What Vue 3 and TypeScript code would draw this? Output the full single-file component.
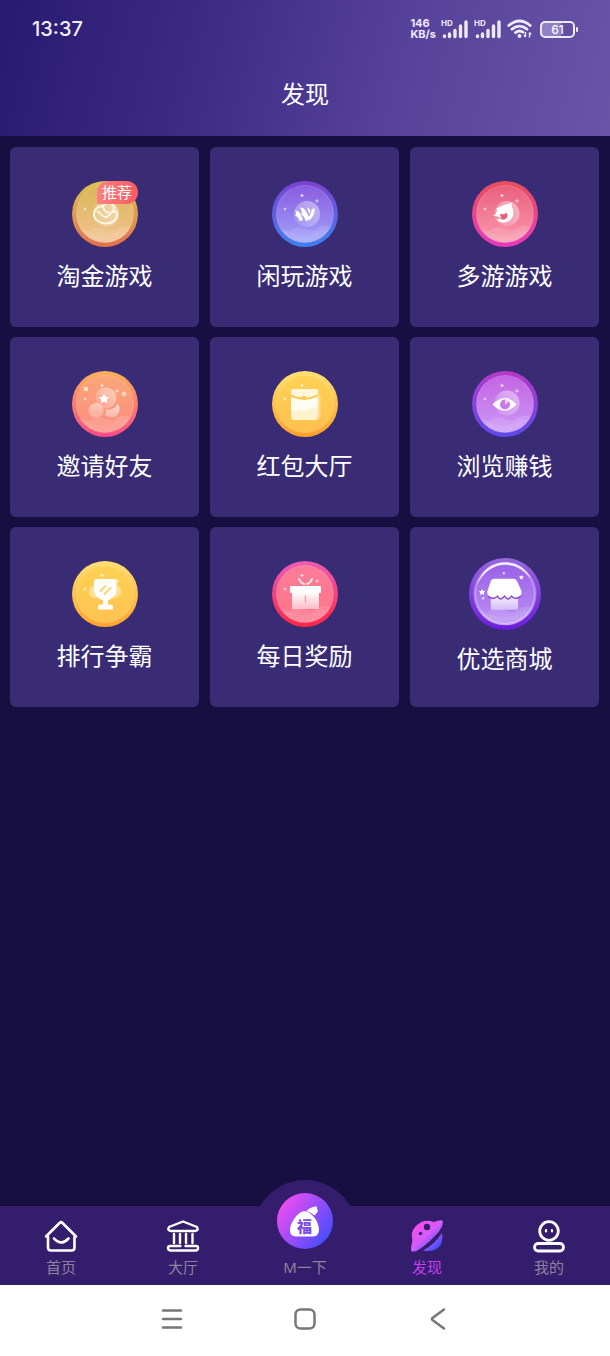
<script setup lang="ts">
interface Game {
  id: string
  label: string
  rim: [string, string]
  face: [string, string]
  clouds: boolean
  badge?: string
}

interface Tab {
  id: string
  label: string
}

const games: Game[] = [
  { id: 'gold', label: '淘金游戏', rim: ['#dcc552', '#e2704c'], face: ['#dab85c', '#f2c08c'], clouds: true, badge: '推荐' },
  { id: 'play', label: '闲玩游戏', rim: ['#7c42d2', '#3f80f0'], face: ['#8a5ce0', '#a0a0fa'], clouds: true },
  { id: 'multi', label: '多游游戏', rim: ['#e8505a', '#ea38bc'], face: ['#ea607c', '#fb98ae'], clouds: true },
  { id: 'invite', label: '邀请好友', rim: ['#fbb058', '#fb4a84'], face: ['#fba678', '#fb8c80'], clouds: true },
  { id: 'packet', label: '红包大厅', rim: ['#ffe070', '#ffa028'], face: ['#ffd254', '#ffc04e'], clouds: false },
  { id: 'browse', label: '浏览赚钱', rim: ['#b838c8', '#5c4aea'], face: ['#c464e2', '#cb98f8'], clouds: true },
  { id: 'rank', label: '排行争霸', rim: ['#ffe070', '#ffa42c'], face: ['#ffd254', '#ffc250'], clouds: false },
  { id: 'daily', label: '每日奖励', rim: ['#ec5cb4', '#ff2646'], face: ['#fb7c98', '#ff7488'], clouds: true },
  { id: 'shop', label: '优选商城', rim: ['#9a66e0', '#6c1cdc'], face: ['#9a60e6', '#bc90f6'], clouds: true },
]

const tabs: Tab[] = [
  { id: 'home', label: '首页' },
  { id: 'hall', label: '大厅' },
  { id: 'lucky', label: 'M一下' },
  { id: 'discover', label: '发现' },
  { id: 'mine', label: '我的' },
]

const active = 'discover'
</script>

<template>
  <div class="page">
    <header class="header">
      <div class="status">
        <time class="clock">13:37</time>
        <div class="indicators">
          <span class="speed"><span>146</span><span>KB/s</span></span>
          <svg v-for="n in 2" :key="n" class="signal" viewBox="0 0 28 20" aria-hidden="true">
            <text x="0" y="7" class="hd">HD</text>
            <g stroke="#eee8fb" stroke-width="3.4" stroke-linecap="round">
              <path d="M3.500 17v.5M8.500 15v2.500M14 11.500v6M19.500 7v10.500M25 3v14.500" />
            </g>
          </svg>
          <svg class="wifi" viewBox="0 0 26 20" aria-hidden="true">
            <g fill="none" stroke="#eee8fb" stroke-width="2.800" stroke-linecap="round">
              <path d="M1.800 6.500Q12.500-2.500 23.200 6.500M5 10.200Q12.500 4 20 10.200M8.500 13.600Q12.500 10.500 16 13.200" />
            </g>
            <circle cx="12.500" cy="17" r="2" fill="#eee8fb" />
            <path d="M18.500 13v5M18.500 18l-1.500-2M22.500 18.500v-5M22.500 13.500l1.500 2" fill="none" stroke="#eee8fb" stroke-width="1.400" />
          </svg>
          <span class="battery"><span class="level">61</span></span>
        </div>
      </div>
      <h1 class="title">发现</h1>
    </header>

    <main class="grid">
      <button v-for="g in games" :key="g.id" type="button" class="card">
        <span class="medal">
          <svg :class="['coin', { large: g.id === 'shop' }]" viewBox="0 0 66 66" aria-hidden="true">
            <defs>
              <linearGradient :id="`rim-${g.id}`" x1="0" y1="0" x2="0" y2="1">
                <stop offset="0" :stop-color="g.rim[0]" />
                <stop offset="1" :stop-color="g.rim[1]" />
              </linearGradient>
              <linearGradient :id="`face-${g.id}`" x1="0" y1="0" x2="0" y2="1">
                <stop offset="0" :stop-color="g.face[0]" />
                <stop offset="1" :stop-color="g.face[1]" />
              </linearGradient>
              <linearGradient :id="`moon-${g.id}`" x1="1" y1="0" x2="0" y2="1">
                <stop offset="0" stop-color="#fff" stop-opacity="0.5" />
                <stop offset="1" stop-color="#fff" stop-opacity="0.08" />
              </linearGradient>
              <linearGradient :id="`fade-${g.id}`" x1="0" y1="0" x2="0" y2="1">
                <stop offset="0" stop-color="#fff" />
                <stop offset="1" stop-color="#fff" stop-opacity="0.5" />
              </linearGradient>
              <clipPath :id="`clip-${g.id}`"><circle cx="33" cy="33" r="28.500" /></clipPath>
            </defs>
            <circle cx="33" cy="33" r="33" :fill="`url(#rim-${g.id})`" />
            <circle cx="33" cy="33" r="28.500" :fill="`url(#face-${g.id})`" stroke="#fff" stroke-opacity="0.16" stroke-width="1.200" />
            <g v-if="g.clouds" :clip-path="`url(#clip-${g.id})`" fill="#fff">
              <path d="M3 48Q10 47 17 50Q24 44 33 48Q40 52 47 46Q53 43 63 47V66H3Z" opacity="0.12" />
              <path d="M3 54Q13 49 24 53T44 51T63 53V66H3Z" opacity="0.08" />
            </g>
            <g v-if="g.id !== 'shop'" fill="#fff" opacity="0.8">
              <path d="M30 12.500l.7 1.300 1.300.7-1.300.7-.7 1.300-.7-1.300-1.300-.7 1.300-.7z" />
              <path d="M13 26l.6 1.400 1.400.6-1.400.6-.6 1.400-.6-1.400-1.400-.6 1.400-.6z" />
              <path d="M45 17.500l.8 1.700 1.700.8-1.700.8-.8 1.700-.8-1.700-1.700-.8 1.700-.8z" opacity="0.7" />
            </g>

            <template v-if="g.id === 'gold'">
              <circle cx="34" cy="33" r="13" :fill="`url(#moon-${g.id})`" />
              <path d="M31 25C26 25 22 28.500 22 33C22 38.500 27.500 42.500 34 42.500C40.500 42.500 45.500 38.500 45 33C44.500 29.500 41.500 29.500 39 32C36 35.500 34.500 37 31.500 35.500C29 34.500 28 31 25.500 30.500M31 25C31.500 29 33.500 31 36.500 31.500M31 25C33 21.500 38 21 40.500 23.500C43 26 42 29 40 31" fill="none" stroke="#fff8e8" stroke-width="1.800" stroke-linecap="round" />
            </template>

            <template v-else-if="g.id === 'play'">
              <circle cx="35" cy="33" r="13" :fill="`url(#moon-${g.id})`" />
              <path d="M23 29.500Q27 29.500 28.500 33L31 38.500Q29.500 40.500 27.500 40Q27 36.500 23 34.500Q25 32.500 23 29.500Z" fill="#fff" />
              <path d="M28 26.500Q32 26.500 33.500 29.500L37.500 37Q36.500 40 34 40Q33 36 29.500 33.500Q30.500 30 28 26.500Z" fill="#fff" />
              <path d="M35 26.500Q38 27 38.500 31L37.500 33.500Z" fill="#fff" />
              <path d="M42.500 27Q43.500 34.500 37 39.500L36.500 36Q40 32 39.500 28.500Z" fill="#fff" />
            </template>

            <template v-else-if="g.id === 'multi'">
              <circle cx="35" cy="32.500" r="12.500" :fill="`url(#moon-${g.id})`" />
              <path d="M21 35Q26 32 24.500 27.500Q30 23.500 40.500 22Q38.500 24.500 40.500 27Q43.500 35 37 40Q30 44 24 38.500Q28 39 28.500 37Q26 34.500 21 35Z" fill="#fff" />
              <path d="M28 34Q29 32 31 33.500Q33 33 34.500 31.500Q37 35 33.500 38Q30 39.500 28.500 37.500Q29.500 35.500 28 34Z" :fill="g.face[0]" />
            </template>

            <template v-else-if="g.id === 'invite'">
              <circle cx="34" cy="27" r="10.500" :fill="`url(#moon-${g.id})`" />
              <circle cx="24" cy="39.500" r="7.500" :fill="`url(#fade-${g.id})`" opacity="0.45" />
              <path d="M33 38.500Q42 40 46 32.500Q50 40 44.500 45Q39 48 33 44Q35 41 33 38.500Z" :fill="`url(#fade-${g.id})`" opacity="0.65" />
              <path d="M32 22.500l1.600 3.200 3.500.5-2.600 2.500.7 3.500-3.200-1.800-3.200 1.800.7-3.500-2.600-2.500 3.500-.5z" fill="#fff" />
              <circle cx="14" cy="18" r="2.200" fill="#ffe2c8" />
              <circle cx="52" cy="23" r="2" fill="#ffe2c8" fill-opacity="0.6" stroke="#ffe2c8" />
            </template>

            <template v-else-if="g.id === 'packet'">
              <path d="M45 22q3.500 1 3.500 4v18q0 4-4 4z" fill="#fff" opacity="0.35" />
              <rect x="19" y="18" width="27" height="31" rx="3" fill="#fff2cc" />
              <path d="M19 27Q32 31 46 27V35Q32 43 19 39Z" fill="#fff" opacity="0.75" />
              <path d="M19 21q0-3 3-3h21q3 0 3 3v3Q40 27.500 32 27.500Q24 27.500 19 24Z" fill="#fff6dc" />
              <path d="M19 24Q24 27.500 32 27.500Q40 27.500 46 24" fill="none" stroke="#ffc752" stroke-width="2" />
              <circle cx="32" cy="27" r="2.200" fill="#ffc752" />
            </template>

            <template v-else-if="g.id === 'browse'">
              <circle cx="35" cy="32" r="12.500" :fill="`url(#moon-${g.id})`" />
              <path d="M20.500 33.500Q33 20.500 44.500 33.500Q33 46 20.500 33.500Z" fill="#fff" />
              <circle cx="33" cy="33.500" r="5" fill="#c87ae9" />
              <path d="M33 33.500V28.500a5 5 0 0 1 4 2z" fill="#f0d5ff" />
            </template>

            <template v-else-if="g.id === 'rank'">
              <rect x="17" y="24" width="32" height="13" rx="6" fill="#fff" opacity="0.4" />
              <path d="M22 20.500Q22 18 24.500 18H42Q44.500 18 44.500 20.500V28Q44.500 36 36 39.500V43.500H38.500Q41 43.500 41 46V48.500H26V46Q26 43.500 28.500 43.500H31V39.500Q22 36 22 28Z" fill="#fff" />
              <path d="M28.500 30l5-5M32.500 33l6-6" stroke="#ffd06a" stroke-width="1.800" stroke-linecap="round" />
            </template>

            <template v-else-if="g.id === 'daily'">
              <path d="M27 18Q28.500 22 32 23M40 18Q38.500 22 35 23" fill="none" stroke="#ffe8ee" stroke-width="2" stroke-linecap="round" />
              <rect x="20" y="31" width="27" height="17" :fill="`url(#fade-${g.id})`" />
              <rect x="18" y="25" width="31" height="7" rx="1" fill="#fff" />
              <path d="M33.500 35v6" stroke="#ff9aae" stroke-width="1.400" stroke-linecap="round" />
            </template>

            <template v-else>
              <circle cx="33" cy="33" r="27" fill="none" stroke="#fff" stroke-opacity="0.35" />
              <path d="M7 25Q14 4 34 4Q49 4 57 19Q47 6 33 6Q16 7 7 25Z" fill="#fff" opacity="0.9" />
              <path d="M20 35h25v11.500q0 1-1 1H21q-1 0-1-1z" :fill="`url(#fade-${g.id})`" opacity="0.9" />
              <path d="M23 19H40.500Q43 19 44 21L48 30Q49 34 45.500 36Q41.500 38 39 34.500Q36 39 32.500 34.500Q29 39 26 34.500Q23 38 19 36Q16 34 17 30L20 21Q21 19 23 19Z" fill="#fff" />
              <path d="M17.500 35Q22 39 26 35Q29 40 32.500 35Q36 40 39 35Q42.500 39 47.500 35" fill="none" stroke="#8d4ddc" stroke-width="1.400" />
              <path d="M12 28.500l.9 1.800 2 .2-1.400 1.500.3 2-1.800-.9-1.800.9.3-2-1.400-1.500 2-.2zM48 15.500l.7 1.300 1.500.2-1 1.100.2 1.500-1.400-.7-1.300.7.2-1.500-1-1.100 1.400-.2z" fill="#fff" />
              <circle cx="32" cy="14" r="1" fill="#fff" />
              <circle cx="13" cy="37" r="1" fill="#fff" />
            </template>
          </svg>
          <span v-if="g.badge" class="badge">{{ g.badge }}</span>
        </span>
        <span class="name">{{ g.label }}</span>
      </button>
    </main>

    <nav class="tabs" aria-label="主导航">
      <a v-for="t in tabs" :key="t.id" href="#" :class="['tab', { active: t.id === active, raised: t.id === 'lucky' }]" :aria-current="t.id === active ? 'page' : undefined">
        <svg v-if="t.id === 'home'" class="tab-icon" viewBox="0 0 34 34" aria-hidden="true">
          <g fill="none" stroke="#fff" stroke-width="2.600" stroke-linecap="round" stroke-linejoin="round">
            <path d="M4 17.500H2L15.500 4Q17 2.500 18.500 4L32 17.500H30.500V28.500Q30.500 31.500 27.500 31.500H7Q4 31.500 4 28.500Z" />
            <path d="M10 19.500Q17 27.500 24.500 19.500" />
          </g>
        </svg>
        <svg v-else-if="t.id === 'hall'" class="tab-icon" viewBox="0 0 34 34" aria-hidden="true">
          <g fill="none" stroke="#fff" stroke-width="2.400" stroke-linecap="round" stroke-linejoin="round">
            <path d="M17 2.500L31 8Q33 11.500 29 12H5Q1 11.500 3 8Z" />
            <path d="M8 15V24M14 15V24M20 15V24M26.500 15V24" />
            <path d="M14.500 27H4.500Q2 27 2 29T4.500 31.500H29.500Q32 31.500 32 29T29.500 27H19.500" />
          </g>
        </svg>
        <svg v-else-if="t.id === 'lucky'" class="lucky-icon" viewBox="0 0 56 56" aria-hidden="true">
          <defs>
            <linearGradient id="lucky-fill" x1="0.1" y1="0.2" x2="0.9" y2="0.8">
              <stop offset="0" stop-color="#e84df2" />
              <stop offset="1" stop-color="#4a4cff" />
            </linearGradient>
          </defs>
          <circle cx="28" cy="28" r="28" fill="url(#lucky-fill)" />
          <path d="M18.500 24Q27 13 36 23Q41 28 42 36Q42 43.500 36 43.500H19Q13 43.500 13 37Q13 31 18.500 24Z" fill="#fff" />
          <path d="M29.500 18Q33.500 13.500 40 13.500Q39.500 15.500 41 17.500Q40.500 20 37.500 22.500Q34 19 29.500 18Z" fill="#fff" />
          <text x="27.500" y="39" class="fortune">福</text>
        </svg>
        <svg v-else-if="t.id === 'discover'" class="tab-icon" viewBox="0 0 34 34" aria-hidden="true">
          <defs>
            <linearGradient id="planet-fill" gradientUnits="userSpaceOnUse" x1="8" y1="6" x2="28" y2="28">
              <stop offset="0" stop-color="#f04df0" />
              <stop offset="0.45" stop-color="#d65bf8" />
              <stop offset="1" stop-color="#454fff" />
            </linearGradient>
          </defs>
          <path d="M2.500 21Q0 12 7 6Q14-0.500 24 3Q32 0 33 2.500Q33 9 25.500 16.500Q15 27.500 6.500 32Q1 34 1 31Q1 27 2.500 21ZM32 14Q33.500 24 28.500 28.500Q22 33.500 13 31.500Q24 26 32 14Z" fill="url(#planet-fill)" />
          <circle cx="17" cy="8" r="3.200" fill="#351d6d" />
          <circle cx="10.500" cy="14.500" r="1.700" fill="#351d6d" />
        </svg>
        <svg v-else class="tab-icon" viewBox="0 0 34 34" aria-hidden="true">
          <g fill="none" stroke="#fff" stroke-width="2.800" stroke-linecap="round">
            <circle cx="17" cy="12" r="9.300" />
            <rect x="2.500" y="24.500" width="29" height="7.500" rx="3.700" />
            <path d="M14 11v1.500M20 11v1.500" stroke-width="2.200" />
          </g>
        </svg>
        <span class="tab-label">{{ t.label }}</span>
      </a>
    </nav>

    <div class="system" role="group" aria-label="系统导航">
      <button type="button" class="key" aria-label="最近任务">
        <svg viewBox="0 0 24 24" aria-hidden="true"><path d="M3 3.500h18M3 12h18M3 20.500h18" /></svg>
      </button>
      <button type="button" class="key" aria-label="主屏幕">
        <svg viewBox="0 0 24 24" aria-hidden="true"><rect x="2.500" y="2.500" width="19" height="19" rx="5" /></svg>
      </button>
      <button type="button" class="key" aria-label="返回">
        <svg viewBox="0 0 24 24" aria-hidden="true"><path d="M18 2.500L6.500 11Q5.500 12 6.500 13L18 21.500" /></svg>
      </button>
    </div>
  </div>
</template>

<style>
body {
  margin: 0;
  background: #170e41;
}
</style>

<style scoped>
.page {
  display: flex;
  flex-direction: column;
  min-height: 100vh;
  background: #170e41;
  color: #fff;
  font-family: "Noto Sans", "Noto Sans CJK SC", sans-serif;
}

.header {
  display: flex;
  flex-direction: column;
  height: 136px;
  background: linear-gradient(104deg, #281a70 0%, #3e2c87 35%, #56429a 65%, #6855a8 100%);
}

.status {
  display: flex;
  align-items: center;
  justify-content: space-between;
  height: 58px;
  padding: 0 32px;
}

.clock {
  font: 500 20px/24px Inter, sans-serif;
  color: #f1edfb;
}

.indicators {
  display: flex;
  align-items: center;
  gap: 5px;
}

.speed {
  display: flex;
  flex-direction: column;
  font: 700 11px/11px Inter, sans-serif;
  color: #eee8fb;
}

.signal {
  width: 28px;
  height: 20px;
}

.hd {
  font: 700 8px Inter, sans-serif;
  fill: #eee8fb;
}

.wifi {
  width: 26px;
  height: 20px;
}

.battery {
  position: relative;
  box-sizing: border-box;
  width: 35px;
  height: 17px;
  margin: 0 3px 0 2px;
  border: 2px solid #eee8fb;
  border-radius: 5px;
  background: linear-gradient(90deg, #9180c4 61%, transparent 61%);
}

.battery::after {
  content: "";
  position: absolute;
  top: 4px;
  right: -5px;
  width: 2px;
  height: 5px;
  border-radius: 1px;
  background: #eee8fb;
}

.level {
  display: block;
  font: 500 12px/13px Inter, sans-serif;
  text-align: center;
}

.title {
  margin: 18px 0 0;
  font-size: 24px;
  line-height: 36px;
  font-weight: 400;
  text-align: center;
}

.grid {
  display: grid;
  flex: 1;
  grid-template-columns: repeat(3, 1fr);
  grid-auto-rows: 180px;
  align-content: start;
  gap: 10px 11px;
  padding: 11px 11px 40px 10px;
}

.card {
  display: flex;
  flex-direction: column;
  align-items: center;
  justify-content: center;
  gap: 12px;
  padding: 0;
  border: 0;
  border-radius: 6px;
  background: #392c74;
  color: #fff;
  font-family: inherit;
  cursor: pointer;
}

.medal {
  position: relative;
  display: flex;
}

.coin {
  width: 66px;
  height: 66px;
}

.coin.large {
  width: 72px;
  height: 72px;
}

.badge {
  position: absolute;
  top: 0;
  left: 25px;
  width: 41px;
  border-radius: 12px 12px 12px 3px;
  background: linear-gradient(90deg, #fb8180, #f95a62);
  font-size: 15px;
  line-height: 23px;
  text-align: center;
}

.name {
  font-size: 24px;
  line-height: 34px;
}

.tabs {
  position: relative;
  display: grid;
  grid-template-columns: repeat(5, 1fr);
  grid-template-rows: 100%;
  height: 79px;
  background: #351d6d;
}

.tabs::before {
  content: "";
  position: absolute;
  top: -26px;
  left: 50%;
  width: 104px;
  height: 104px;
  margin-left: -52px;
  border-radius: 50%;
  background: #351d6d;
}

.tab {
  position: relative;
  display: flex;
  flex-direction: column;
  align-items: center;
  justify-content: flex-end;
  gap: 4px;
  padding-bottom: 8px;
  color: #8c829c;
  text-decoration: none;
}

.tab.active {
  color: #c43df0;
}

.tab.raised {
  gap: 8px;
}

.tab-icon {
  flex: none;
  width: 34px;
  height: 34px;
}

.lucky-icon {
  flex: none;
  width: 56px;
  height: 56px;
}

.fortune {
  font: 900 15px "Noto Sans CJK SC", sans-serif;
  fill: #7d4de8;
  text-anchor: middle;
}

.tab-label {
  font-size: 15px;
  line-height: 20px;
}

.system {
  display: flex;
  justify-content: center;
  align-items: center;
  gap: 109px;
  box-sizing: border-box;
  height: 71px;
  padding-bottom: 4px;
  background: #fff;
}

.key {
  display: flex;
  padding: 0;
  border: 0;
  background: none;
  cursor: pointer;
}

.key svg {
  width: 24px;
  height: 24px;
  fill: none;
  stroke: #777;
  stroke-width: 2.5;
  stroke-linecap: round;
}
</style>
